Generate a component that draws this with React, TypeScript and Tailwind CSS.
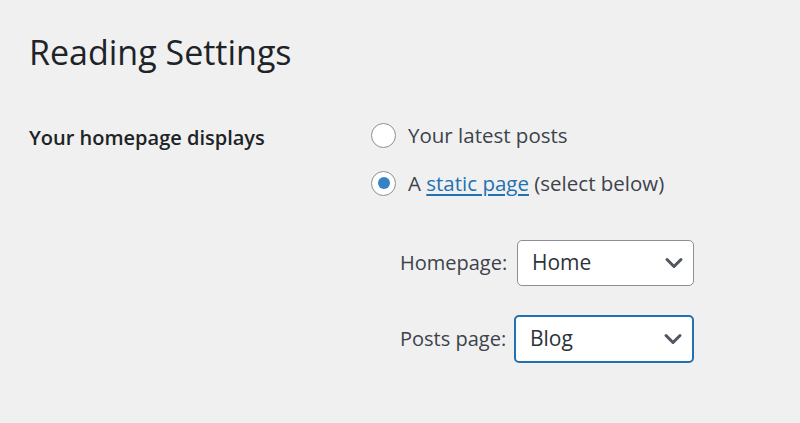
import { ChevronDown } from "lucide-react";

const font = { fontFamily: '"Open Sans", "Noto Sans", Arial, sans-serif' };

function Radio({ checked }: { checked?: boolean }) {
  return (
    <span className="flex h-[25px] w-[25px] shrink-0 items-center justify-center rounded-full border-[1.5px] border-[#8c8f94] bg-white">
      {checked && <span className="h-[12px] w-[12px] rounded-full bg-[#3582c4]" />}
    </span>
  );
}

function Select({ value, focused }: { value: string; focused?: boolean }) {
  return (
    <div
      className={
        focused
          ? "flex h-[48px] w-[180px] items-center justify-between rounded-[5px] border-2 border-[#2271b1] bg-white pl-[14px] pr-[5px]"
          : "flex h-[46px] w-[177px] items-center justify-between rounded-[5px] border-[1.5px] border-[#8c8f94] bg-white pl-[14px] pr-[5px]"
      }
    >
      <span className="text-[21px] text-[#2c3338]">{value}</span>
      <ChevronDown className="h-[28px] w-[28px] text-[#50575e]" strokeWidth={2.6} />
    </div>
  );
}

export default function App() {
  return (
    <div className="min-h-[423px] w-[800px] bg-[#f0f0f1] pl-[29px] text-[#1d2327]" style={font}>
      <h1 className="pt-[28px] text-[34px] font-normal leading-[48px] text-[#1d2327]">Reading Settings</h1>

      <div className="mt-[45px] flex">
        <div className="w-[342px] shrink-0 pt-[2px] text-[20px] font-semibold text-[#1d2327]">Your homepage displays</div>

        <div className="flex flex-col">
          <label className="flex h-[28px] items-center gap-[12px] text-[20.5px] text-[#3c434a]">
            <Radio />
            <span>Your latest posts</span>
          </label>
          <label className="mt-[20px] flex h-[28px] items-center gap-[12px] text-[20.5px] text-[#3c434a]">
            <Radio checked />
            <span>
              A <a className="text-[#2271b1] underline underline-offset-[3px]">static page</a> (select below)
            </span>
          </label>

          <div className="mt-[43px] flex w-[323px] flex-col gap-[29px] pl-[29px]">
            <div className="flex items-center justify-between">
              <span className="text-[20px] text-[#3c434a]">Homepage:</span>
              <Select value="Home" />
            </div>
            <div className="flex items-center justify-between">
              <span className="text-[20px] text-[#3c434a]">Posts page:</span>
              <Select value="Blog" focused />
            </div>
          </div>
        </div>
      </div>
    </div>
  );
}
